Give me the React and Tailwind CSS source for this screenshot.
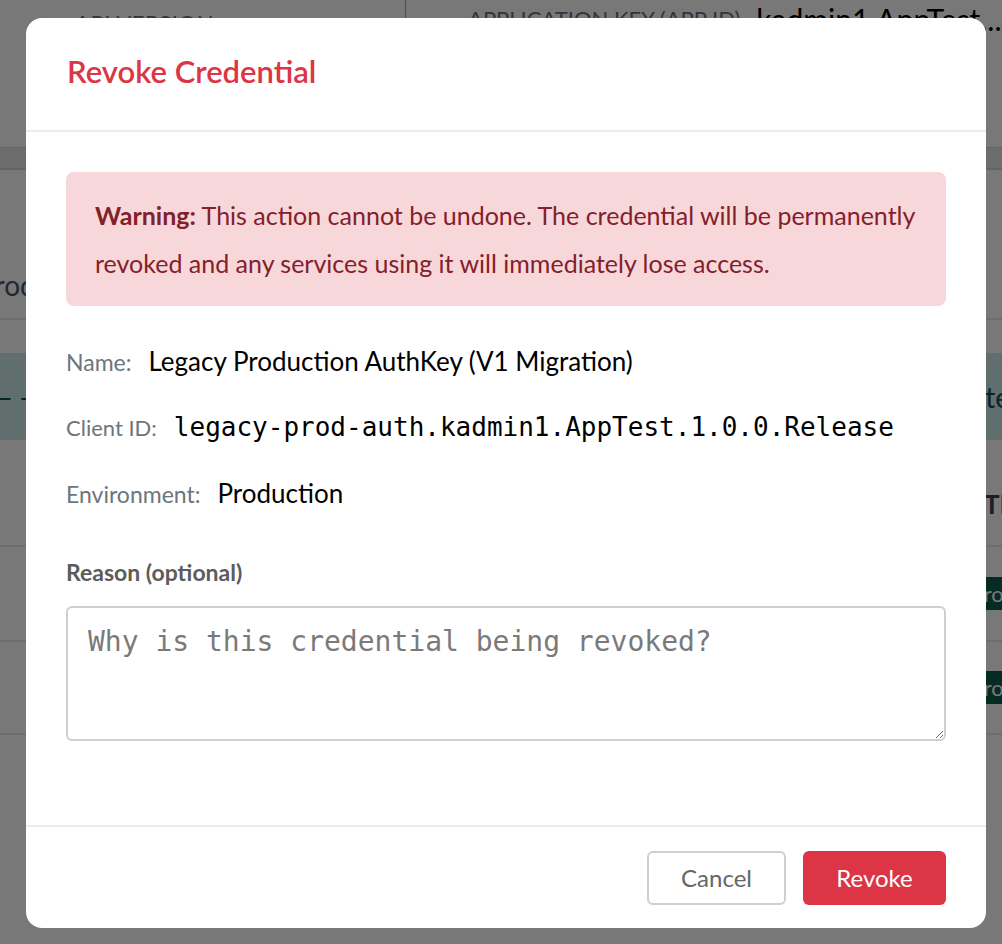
import React from "react";

const sans = { fontFamily: "Lato, 'Noto Sans', sans-serif" };
const mono = "font-['DejaVu_Sans_Mono',monospace]";

function BackgroundTable() {
  return (
    <div className="absolute inset-0 bg-white overflow-hidden" style={sans}>
      <div className="flex h-[148px] border-b border-gray-300">
        <div className="w-[405px] pl-[75px] pt-[6px] text-[22px] text-gray-500 tracking-wide">API VERSION</div>
        <div className="flex h-[40px] border-l border-gray-400 pl-[62px] pt-[2px] gap-4 whitespace-nowrap">
          <span className="text-[22px] text-gray-500">APPLICATION KEY (APP ID)</span>
          <span className="text-[30px] text-black leading-none pt-[2px]">kadmin1.AppTest...</span>
        </div>
      </div>
      <div className="h-[22px] bg-gray-200 border-b-2 border-gray-300" />
      <div className="h-[148px] flex items-end pb-[12px] text-[28px] text-gray-600">
        <span className="-ml-[22px]">Production</span>
      </div>
      <div className="h-[35px] border-t-2 border-gray-200" />
      <div className="h-[87px] bg-[#cce9ea] flex items-center justify-between text-[28px] text-[#0b4f52]">
        <span className="-ml-[10px]">— —</span>
        <span className="-mr-[8px]">Complete</span>
      </div>
      <div className="h-[105px] flex items-center justify-end pt-[24px] text-[26px] font-bold text-gray-700">
        <span className="-mr-[20px]">ACTIF</span>
      </div>
      <div className="h-[95px] border-t-2 border-gray-200 flex items-center justify-end">
        <span className="bg-[#0d5c4a] text-white text-[22px] px-2 -mr-[22px]">Prod</span>
      </div>
      <div className="h-[93px] border-t-2 border-gray-200 flex items-center justify-end">
        <span className="bg-[#0d5c4a] text-white text-[22px] px-2 -mr-[22px]">Prod</span>
      </div>
      <div className="border-t-2 border-gray-200" />
    </div>
  );
}

export default function App() {
  return (
    <div className="relative w-[1002px] h-[944px] overflow-hidden" style={sans}>
      <BackgroundTable />
      <div className="absolute inset-0 bg-black/[0.53]">
        <div className="ml-[26px] mt-[18px] w-[960px] h-[910px] bg-white rounded-[16px] flex flex-col">
          <div className="h-[114px] border-b-2 border-[#ececec] px-[41px] flex items-center">
            <h2 className="text-[31px] font-semibold text-[#dc3545] leading-none -mt-[6px]">Revoke Credential</h2>
          </div>

          <div className="flex-1 px-[40px] pt-[40px]">
            <div className="bg-[#f8d7da] rounded-[8px] px-[29px] py-[19px] text-[25px] leading-[48px] text-[#842029] whitespace-nowrap">
              <strong className="font-bold">Warning:</strong> This action cannot be undone. The credential will be permanently
              <br />
              revoked and any services using it will immediately lose access.
            </div>

            <div className="mt-[36px] flex flex-col gap-[32px]">
              <div className="flex items-baseline gap-[17px] h-[34px]">
                <span className="text-[23px] text-[#6c757d]">Name:</span>
                <span className="text-[26px] text-black">Legacy Production AuthKey (V1 Migration)</span>
              </div>
              <div className="flex items-baseline gap-[17px] h-[34px]">
                <span className="text-[22px] text-[#6c757d]">Client ID:</span>
                <span className={`text-[26px] text-black ${mono}`}>legacy-prod-auth.kadmin1.AppTest.1.0.0.Release</span>
              </div>
              <div className="flex items-baseline gap-[17px] h-[34px]">
                <span className="text-[23px] text-[#6c757d]">Environment:</span>
                <span className="text-[26px] text-black">Production</span>
              </div>
            </div>

            <label className="block mt-[47px] text-[23px] font-bold text-[#5c5c5c]">Reason (optional)</label>
            <textarea
              placeholder="Why is this credential being revoked?"
              className={`mt-[16px] block w-full h-[135px] border-2 border-[#cfcfcf] rounded-[6px] px-[20px] py-[13px] text-[28px] placeholder:text-[#7a7a7a] outline-none ${mono}`}
            />
          </div>

          <div className="h-[103px] border-t-2 border-[#ececec] px-[40px] flex items-center justify-end gap-[17px]">
            <button className="w-[139px] h-[54px] rounded-[6px] border-2 border-[#cfcfcf] text-[24px] text-[#666]">
              Cancel
            </button>
            <button className="w-[143px] h-[54px] rounded-[6px] bg-[#dc3545] text-[24px] text-white">
              Revoke
            </button>
          </div>
        </div>
      </div>
    </div>
  );
}
